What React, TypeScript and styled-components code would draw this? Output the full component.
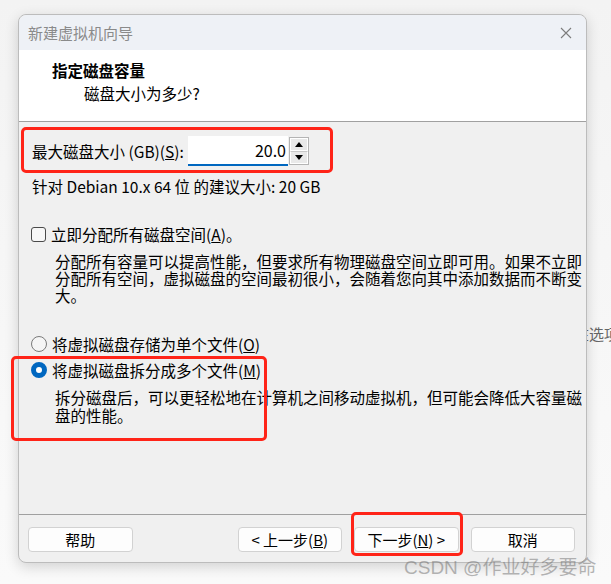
import React from "react";
import styled, { createGlobalStyle } from "styled-components";

const GlobalStyle = createGlobalStyle`
  html, body {
    margin: 0;
    padding: 0;
    background: #f8f8f8;
  }
  body {
    font-family: "Noto Sans CJK SC", "Noto Sans", sans-serif;
    color: #000;
  }
`;

/* Styled Components */
const Page = styled.div`
  position: relative;
  width: 611px;
  height: 584px;
  overflow: hidden;
  padding: 14px 0 0 18px;
  box-sizing: border-box;
  background: linear-gradient(#f3f3f3, #fafafa);
`;

const BackdropText = styled.span`
  position: absolute;
  left: 574px;
  top: 323px;
  font-size: 15px;
  color: #666;
  white-space: nowrap;
`;

const Window = styled.div`
  position: relative;
  z-index: 1;
  width: 569px;
  height: 549px;
  box-sizing: border-box;
  border: 1px solid #bcbcbc;
  border-radius: 8px;
  background: #f0f0f0;
  box-shadow: 0 4px 14px rgba(0, 0, 0, 0.16);
  display: flex;
  flex-direction: column;
`;

const TitleBar = styled.div`
  height: 35px;
  display: flex;
  align-items: center;
  justify-content: space-between;
  padding: 0 14px 0 9px;
  background: #eef1f6;
  border-radius: 8px 8px 0 0;
  color: #8a8a8a;
  font-size: 15px;
`;

const Header = styled.div`
  height: 72px;
  box-sizing: border-box;
  padding: 10px 0 0 33px;
  background: #fff;
  border-bottom: 1px solid #a0a0a0;
`;

const HeaderTitle = styled.div`
  font-size: 15.5px;
  font-weight: 700;
  line-height: 20px;
`;

const HeaderSub = styled.div`
  margin: 4px 0 0 32px;
  font-size: 15.5px;
  line-height: 18px;
`;

const Body = styled.div`
  flex: 1;
  padding: 14px 0 0 13px;
  font-size: 15.5px;
  display: flex;
  flex-direction: column;
  align-items: flex-start;
`;

const SizeRow = styled.div`
  display: flex;
  align-items: center;
  height: 30px;
`;

const Label = styled.span`
  line-height: 18px;
  width: 156px;
`;

const NumberInput = styled.div`
  width: 100px;
  height: 30px;
  box-sizing: border-box;
  background: #fff;
  border-bottom: 2px solid #0067c0;
  display: flex;
  align-items: center;
  justify-content: flex-end;
  padding-right: 2px;
  font-size: 16px;
`;

const Spinner = styled.div`
  display: flex;
  flex-direction: column;
  margin-left: 1px;
  width: 20px;
  height: 28px;
  box-sizing: border-box;
  border: 1px solid #b4b4b4;
  background: #e9e9e9;
`;

const SpinHalf = styled.div<{ $down?: boolean }>`
  flex: 1;
  display: flex;
  align-items: center;
  justify-content: center;
  border: 1px solid #fff;
  border-top-color: ${(p) => (p.$down ? "#c8c8c8" : "#fff")};
`;

const Line = styled.div<{ $mt: number; $indent?: number; $lh?: number }>`
  margin-top: ${(p) => p.$mt}px;
  margin-left: ${(p) => p.$indent ?? 0}px;
  line-height: ${(p) => p.$lh ?? 18}px;
  white-space: nowrap;
`;

const OptionRow = styled.div<{ $mt: number }>`
  margin-top: ${(p) => p.$mt}px;
  display: flex;
  align-items: center;
  height: 18px;
  white-space: nowrap;
`;

const CheckBox = styled.span`
  width: 15px;
  height: 15px;
  box-sizing: border-box;
  border: 1px solid #4a4a4a;
  border-radius: 3px;
  background: #f7f7f7;
  margin: 0 5px 0 -1px;
`;

const Radio = styled.span<{ $checked?: boolean }>`
  width: 16px;
  height: 16px;
  box-sizing: border-box;
  border-radius: 50%;
  margin: 0 5px 0 -1px;
  border: ${(p) => (p.$checked ? "5px solid #0067c0" : "1px solid #7a7a7a")};
  background: ${(p) => (p.$checked ? "#fff" : "#f5f5f5")};
`;

const Footer = styled.div`
  height: 48px;
  box-sizing: border-box;
  border-top: 1px solid #a0a0a0;
  padding: 12px 11px 0 9px;
  display: flex;
  align-items: flex-start;
`;

const Button = styled.button<{ $ml?: number }>`
  width: 105px;
  height: 25px;
  margin-left: ${(p) => p.$ml ?? 0}px;
  box-sizing: border-box;
  background: #fdfdfd;
  border: 1px solid #d2d2d2;
  border-radius: 4px;
  font-family: inherit;
  font-size: 15px;
  color: #000;
  padding: 0;
  line-height: 22px;
`;

const Mark = styled.div<{ $x: number; $y: number; $w: number; $h: number }>`
  position: absolute;
  left: ${(p) => p.$x}px;
  top: ${(p) => p.$y}px;
  width: ${(p) => p.$w}px;
  height: ${(p) => p.$h}px;
  box-sizing: border-box;
  border: 3px solid #ff2418;
  border-radius: 5px;
  z-index: 3;
`;

const Watermark = styled.div`
  position: absolute;
  left: 404px;
  top: 552px;
  z-index: 4;
  font-family: "Liberation Sans", "Noto Sans CJK SC", sans-serif;
  font-size: 19px;
  color: rgba(110, 110, 110, 0.5);
  white-space: nowrap;
`;

/* Components */
const CloseIcon = () => (
  <svg width="12" height="12" viewBox="0 0 12 12">
    <path d="M1 1L11 11M11 1L1 11" stroke="#7c7c7c" strokeWidth="1.1" />
  </svg>
);

const Triangle = ({ down }: { down?: boolean }) => (
  <svg width="8" height="5" viewBox="0 0 8 5">
    <path d={down ? "M0 0H8L4 5Z" : "M0 5H8L4 0Z"} fill="#000" />
  </svg>
);

const App: React.FC = () => (
  <>
    <GlobalStyle />
    <Page>
      <BackdropText>在选项</BackdropText>
      <Window>
        <TitleBar>
          <span>新建虚拟机向导</span>
          <CloseIcon />
        </TitleBar>
        <Header>
          <HeaderTitle>指定磁盘容量</HeaderTitle>
          <HeaderSub>磁盘大小为多少?</HeaderSub>
        </Header>
        <Body>
          <SizeRow>
            <Label>
              最大磁盘大小 (GB)(<u>S</u>):
            </Label>
            <NumberInput>20.0</NumberInput>
            <Spinner>
              <SpinHalf>
                <Triangle />
              </SpinHalf>
              <SpinHalf $down>
                <Triangle down />
              </SpinHalf>
            </Spinner>
          </SizeRow>
          <Line $mt={11}>针对 Debian 10.x 64 位 的建议大小: 20 GB</Line>
          <OptionRow $mt={30}>
            <CheckBox />
            立即分配所有磁盘空间(<u>A</u>)。
          </OptionRow>
          <Line $mt={10} $indent={23} $lh={17}>
            分配所有容量可以提高性能，但要求所有物理磁盘空间立即可用。如果不立即
            <br />
            分配所有空间，虚拟磁盘的空间最初很小，会随着您向其中添加数据而不断变
            <br />
            大。
          </Line>
          <OptionRow $mt={31}>
            <Radio />
            将虚拟磁盘存储为单个文件(<u>O</u>)
          </OptionRow>
          <OptionRow $mt={8}>
            <Radio $checked />
            将虚拟磁盘拆分成多个文件(<u>M</u>)
          </OptionRow>
          <Line $mt={9} $indent={23}>
            拆分磁盘后，可以更轻松地在计算机之间移动虚拟机，但可能会降低大容量磁
            <br />
            盘的性能。
          </Line>
        </Body>
        <Footer>
          <Button>帮助</Button>
          <Button $ml={105}>
            &lt; 上一步(<u>B</u>)
          </Button>
          <Button $ml={12}>
            下一步(<u>N</u>) &gt;
          </Button>
          <Button $ml={12}>取消</Button>
        </Footer>
      </Window>
      <Mark $x={21} $y={127} $w={312} $h={46} />
      <Mark $x={11} $y={356} $w={256} $h={85} />
      <Mark $x={351} $y={512} $w={112} $h={44} />
      <Watermark>CSDN @作业好多要命</Watermark>
    </Page>
  </>
);

export default App;
